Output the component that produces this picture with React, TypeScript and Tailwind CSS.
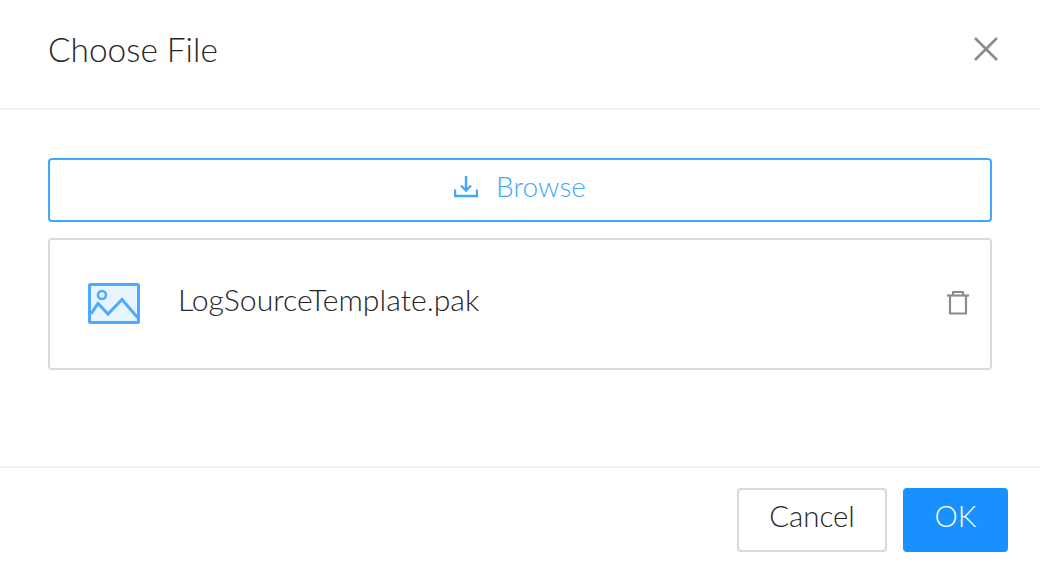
function ImageFileIcon() {
  return (
    <svg width="52" height="41" viewBox="0 0 52 41" fill="none">
      <rect x="1.5" y="1.5" width="49" height="38" rx="1" fill="#e8f5ff" stroke="#4dabff" strokeWidth="3" />
      <circle cx="14" cy="12" r="4" fill="#e8f5ff" stroke="#4dabff" strokeWidth="2.6" />
      <path d="M3 31 L10 20.5 L20 31 L34 16.5 L50 35" stroke="#4dabff" strokeWidth="3" />
    </svg>
  );
}

function DownloadIcon() {
  return (
    <svg width="24" height="24" viewBox="0 0 24 24" fill="none" stroke="#40a9ff" strokeWidth="2.4">
      <path d="M12 1 V15" />
      <path d="M7 10.5 L12 15.5 L17 10.5" />
      <path d="M1 14.5 V21 H23 V14.5" />
    </svg>
  );
}

function TrashIcon() {
  return (
    <svg width="24" height="25" viewBox="0 0 24 25" fill="none" stroke="#8c8c8c" strokeWidth="2.2" strokeLinejoin="round">
      <path d="M1 5.5 H23" />
      <path d="M7 5 V2 H17 V5" />
      <path d="M4 6 V23.5 H20 V6" />
    </svg>
  );
}

function CloseIcon() {
  return (
    <svg width="24" height="24" viewBox="0 0 24 24" fill="none" stroke="#8c8c8c" strokeWidth="2.6">
      <path d="M1 1 L23 23" />
      <path d="M23 1 L1 23" />
    </svg>
  );
}

export default function App() {
  return (
    <div className="flex h-[572px] w-[1040px] flex-col bg-white font-['Lato',sans-serif] font-light text-[#262626]">
      <div className="flex h-[110px] items-center justify-between border-b-2 border-[#f0f0f0] pl-12 pr-[42px]">
        <h1 className="mb-[8px] text-[33.4px] leading-none font-light">Choose File</h1>
        <div className="mb-[10px]">
          <CloseIcon />
        </div>
      </div>

      <div className="flex flex-1 flex-col gap-4 px-12 pt-12">
        <button className="flex h-[64px] items-center justify-center gap-[18px] rounded border-2 border-[#40a9ff] text-[28px] text-[#40a9ff]">
          <span className="mb-[6px]">
            <DownloadIcon />
          </span>
          <span className="mb-[9px]">Browse</span>
        </button>
        <div className="flex h-[132px] items-center rounded border-2 border-[#d9d9d9] pl-[38px] pr-[20px]">
          <span className="mb-[2px]">
            <ImageFileIcon />
          </span>
          <span className="mb-[8px] ml-[38px] flex-1 text-[30.2px]">LogSourceTemplate.pak</span>
          <span className="mb-[3px]">
            <TrashIcon />
          </span>
        </div>
      </div>

      <div className="flex h-[106px] justify-end gap-4 border-t-2 border-[#f0f0f0] pr-8 pt-[20px]">
        <button className="h-[64px] w-[150px] rounded border-2 border-[#d9d9d9] bg-white pb-[7px] text-[29.4px] text-[#262626]">
          Cancel
        </button>
        <button className="h-[64px] w-[105px] rounded bg-[#1890ff] pb-[7px] text-[29.4px] text-white">OK</button>
      </div>
    </div>
  );
}
